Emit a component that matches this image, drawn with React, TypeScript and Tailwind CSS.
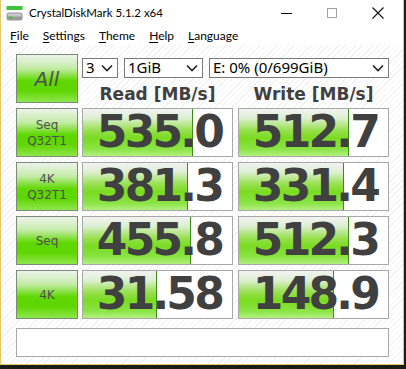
import React from 'react';

/**
 * CrystalDiskMark main window
 */

const rows = [
    { label: ['Seq', 'Q32T1'], read: '535.0', readPct: 73.5, write: '512.7', writePct: 73.5 },
    { label: ['4K', 'Q32T1'], read: '381.3', readPct: 70.5, write: '331.4', writePct: 70.5 },
    { label: ['Seq'], read: '455.8', readPct: 72.5, write: '512.3', writePct: 73.5 },
    { label: ['4K'], read: '31.58', readPct: 49.5, write: '148.9', writePct: 63.5 },
];

function AppIcon() {
    return (
        <svg width="17" height="15" viewBox="0 0 17 15">
            <rect x="0.5" y="0" width="16" height="4" fill="#3cc43c" />
            <rect x="0.5" y="6.5" width="16" height="8" rx="2.5" fill="#9a9a9a" />
            <rect x="1.5" y="7.5" width="14" height="3" rx="1.5" fill="#c8c8c8" />
            <rect x="3" y="10.5" width="3.5" height="2" fill="#2ecc2e" />
        </svg>
    );
}

function Chevron() {
    return (
        <svg width="12" height="8" viewBox="0 0 12 8" className="shrink-0">
            <path d="M1 1.5 L6 6.5 L11 1.5" fill="none" stroke="#222" strokeWidth="1.6" />
        </svg>
    );
}

function Select({ value, className }: { value: string; className: string }) {
    return (
        <div
            className={`flex h-[20px] items-center justify-between border border-[#7a7a7a] bg-white pl-[3px] pr-[4px] font-['Noto_Sans',sans-serif] text-[15px] leading-none text-black ${className}`}
        >
            <span className="-mt-[1px]">{value}</span>
            <Chevron />
        </div>
    );
}

function GreenButton({ children }: { children: React.ReactNode }) {
    return (
        <div className="flex h-[49px] w-[62px] shrink-0 flex-col items-center justify-center border border-[#7b8b7b] bg-[linear-gradient(180deg,#eef2ea_0%,#c4eca8_28%,#5fd800_55%,#5ed600_75%,#8fe64c_100%)] text-[#505050]">
            {children}
        </div>
    );
}

function Result({ value, pct }: { value: string; pct: number }) {
    return (
        <div className="relative h-[49px] w-[151px] shrink-0 border border-[#a8a8a8] bg-white">
            <div
                className="absolute top-0 bottom-0 left-0 border-r border-[#3c8c1c] bg-[linear-gradient(180deg,#f2f2f2_0%,#dcefd0_20%,#98e050_45%,#7adc20_62%,#8ae444_85%,#b4f080_100%)]"
                style={{ width: `${pct}%` }}
            />
            <div className="relative flex h-full items-center justify-end pr-[10px] pb-[1px] font-['DejaVu_Sans',sans-serif] text-[44px] leading-none font-bold tracking-[-2.8px] text-[#404040]">
                {value}
            </div>
        </div>
    );
}

export default function App() {
    return (
        <div className="h-[369px] w-[406px] bg-[#1c1c16]">
            <div className="flex h-[365px] w-[404px] flex-col border-x border-b border-[#e7c76a] bg-white font-['Lato',sans-serif]">
                {/* Title bar */}
                <div className="flex h-[26px] shrink-0 items-center">
                    <div className="ml-[5px] mr-[6px] flex">
                        <AppIcon />
                    </div>
                    <span className="text-[11.5px] leading-none text-black">CrystalDiskMark 5.1.2 x64</span>
                    <div className="ml-auto flex items-center">
                        <div className="flex w-[46px] justify-center">
                            <div className="h-px w-[11px] bg-black" />
                        </div>
                        <div className="flex w-[46px] justify-center">
                            <div className="h-[10px] w-[10px] border border-[#a0a0a0]" />
                        </div>
                        <div className="mr-[2px] flex w-[46px] justify-center">
                            <svg width="12" height="12" viewBox="0 0 12 12">
                                <path d="M0.5 0.5 L11.5 11.5 M11.5 0.5 L0.5 11.5" stroke="#111" strokeWidth="1.1" />
                            </svg>
                        </div>
                    </div>
                </div>

                {/* Menu bar */}
                <div className="flex h-[19px] shrink-0 items-center gap-[14px] pl-[9px] text-[12px] leading-none text-black">
                    <span><span className="underline underline-offset-2">F</span>ile</span>
                    <span><span className="underline underline-offset-2">S</span>ettings</span>
                    <span><span className="underline underline-offset-2">T</span>heme</span>
                    <span><span className="underline underline-offset-2">H</span>elp</span>
                    <span><span className="underline underline-offset-2">L</span>anguage</span>
                </div>

                {/* Body */}
                <div className="flex flex-1 flex-col bg-[repeating-linear-gradient(135deg,#ffffff_0px,#ffffff_3px,#f2f2f2_3px,#f2f2f2_4px)] pt-[9px] pl-[15px]">
                    {/* Header row */}
                    <div className="flex">
                        <GreenButton>
                            <span className="font-['DejaVu_Sans',sans-serif] text-[20px] leading-none italic">All</span>
                        </GreenButton>
                        <div className="ml-[4px] flex w-[307px] flex-col">
                            <div className="mt-[4px] flex">
                                <Select value="3" className="w-[36px]" />
                                <Select value="1GiB" className="ml-[6px] w-[79px]" />
                                <Select value="E: 0% (0/699GiB)" className="ml-[6px] w-[180px]" />
                            </div>
                            <div className="mt-[8px] flex font-['DejaVu_Sans',sans-serif] text-[17px] leading-none font-bold text-[#404040]">
                                <div className="w-[151px] text-center">Read [MB/s]</div>
                                <div className="ml-[5px] w-[151px] text-center">Write [MB/s]</div>
                            </div>
                        </div>
                    </div>

                    {/* Result rows */}
                    {rows.map((r, i) => (
                        <div key={i} className="mt-[5px] flex">
                            <GreenButton>
                                {r.label.map((l) => (
                                    <span key={l} className="font-['DejaVu_Sans',sans-serif] text-[12px] leading-[16px]">
                                        {l}
                                    </span>
                                ))}
                            </GreenButton>
                            <div className="ml-[4px]">
                                <Result value={r.read} pct={r.readPct} />
                            </div>
                            <div className="ml-[5px]">
                                <Result value={r.write} pct={r.writePct} />
                            </div>
                        </div>
                    ))}

                    {/* Comment box */}
                    <div className="mt-[9px] h-[29px] w-[373px] border border-[#a8a8a8] bg-white" />
                </div>
            </div>
        </div>
    );
}
